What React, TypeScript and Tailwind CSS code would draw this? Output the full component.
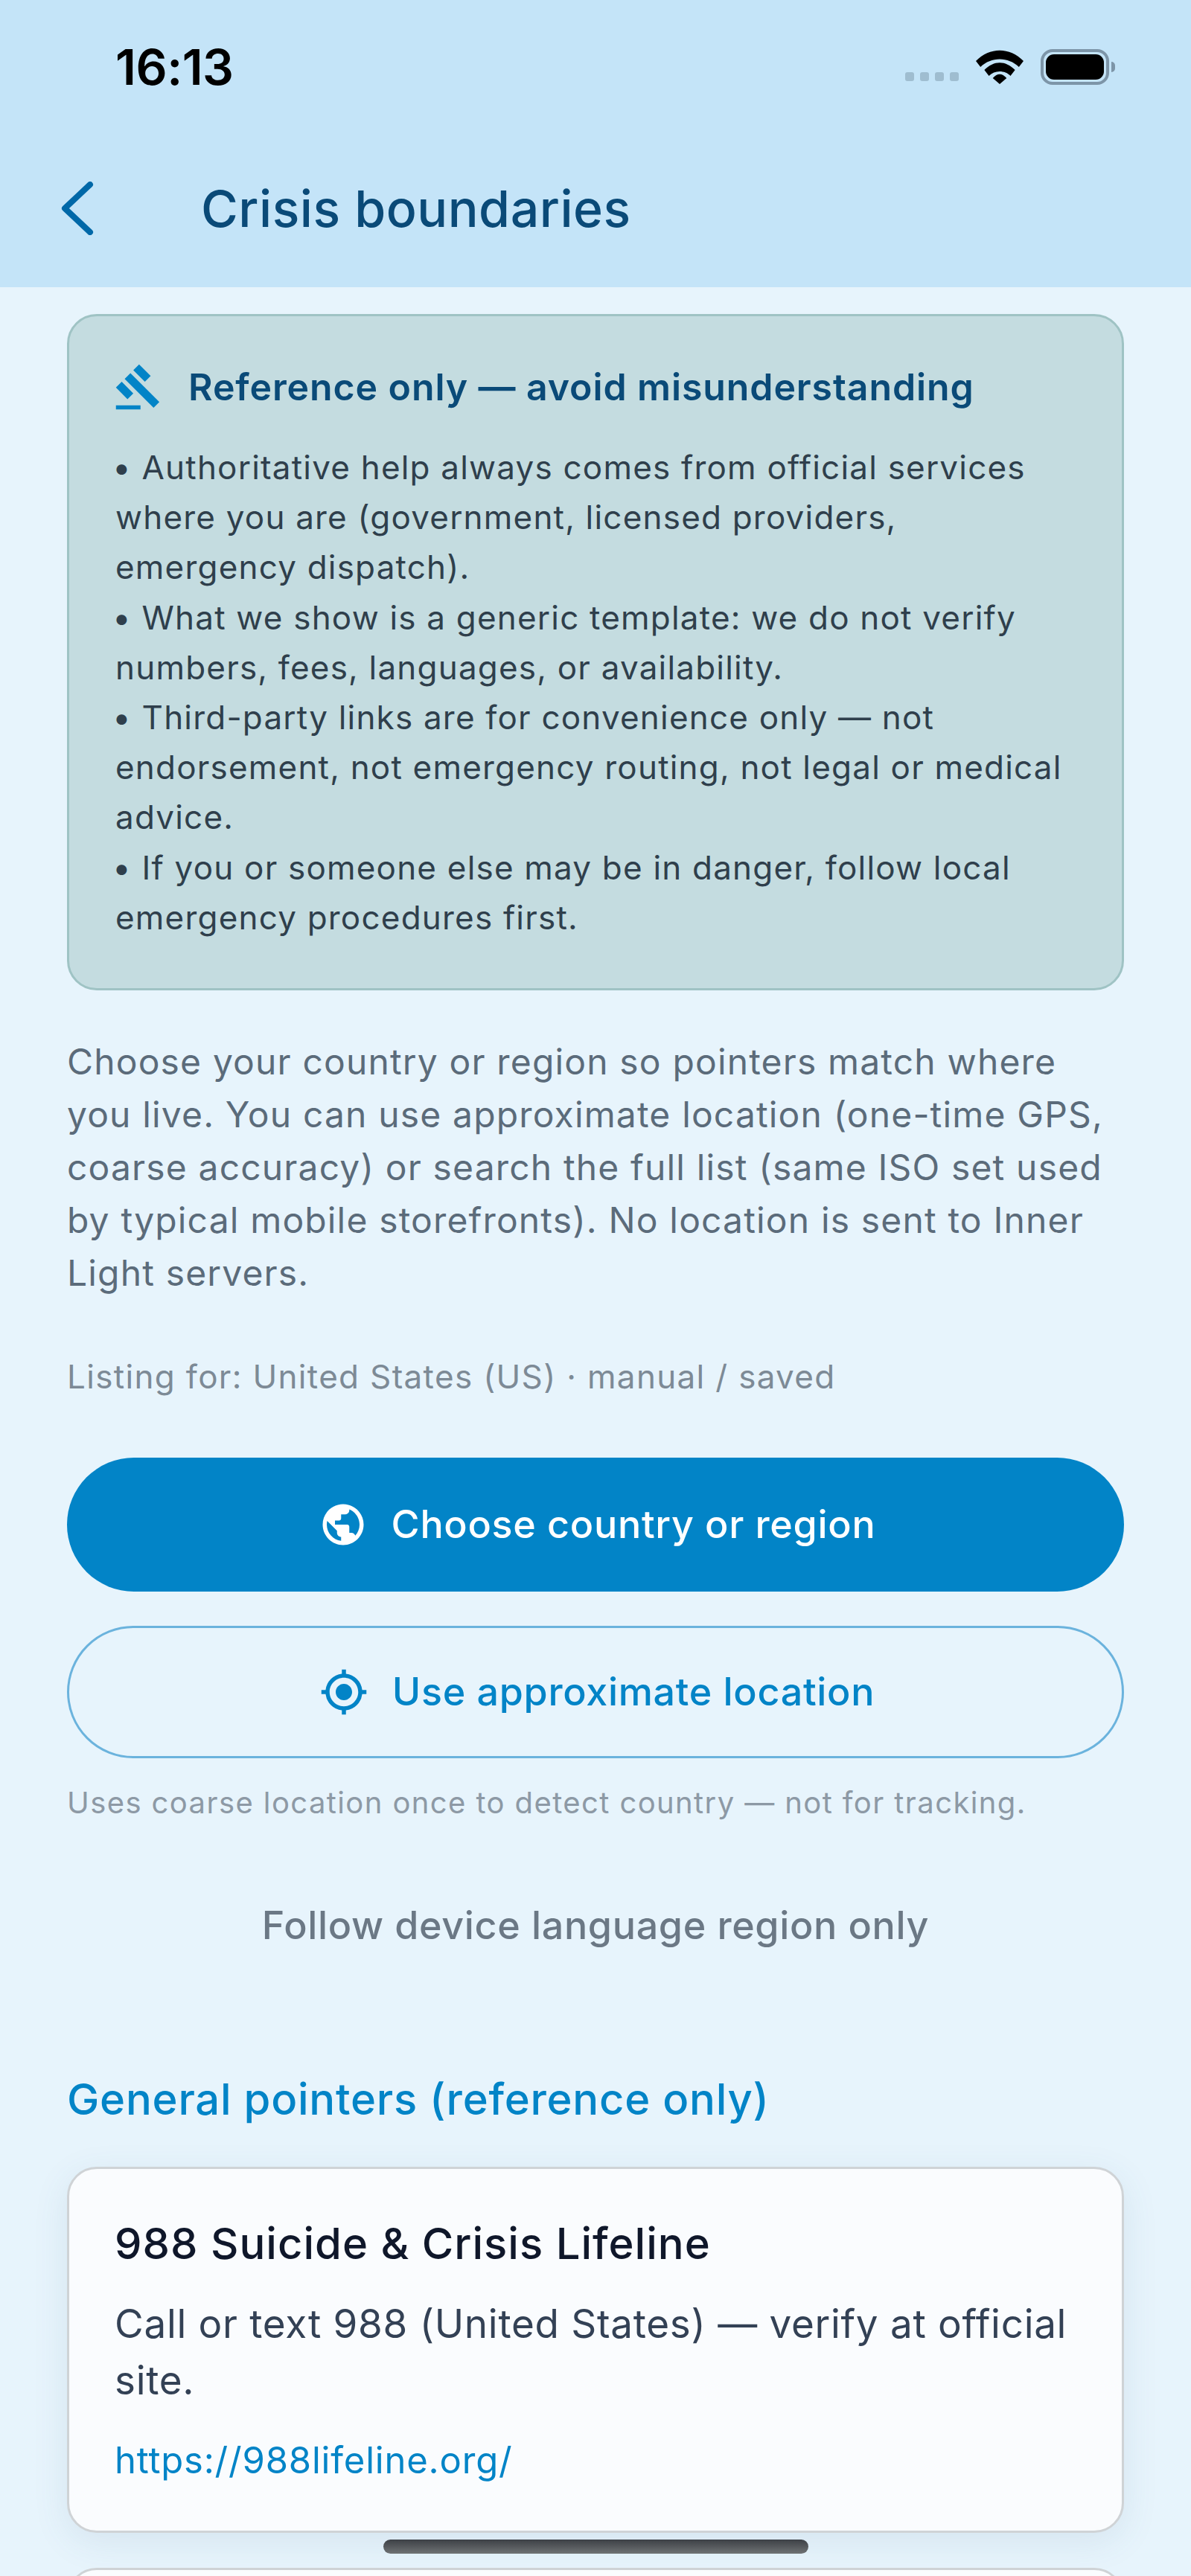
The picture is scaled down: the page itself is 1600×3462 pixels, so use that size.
import React from "react";
import { MdGavel, MdPublic, MdMyLocation } from "react-icons/md";

function StatusBar() {
  return (
    <div className="flex h-[180px] items-start justify-between pl-[155px] pr-[102px] pt-[58px]">
      <span className="text-[66px] leading-[64px] font-semibold text-black tracking-[-0.5px]">16:13</span>
      <div className="flex items-center gap-[23px] pt-[8px]">
        <div className="flex gap-[7.5px] pt-[26px]">
          {[0, 1, 2, 3].map((i) => (
            <span key={i} className="h-[12px] w-[12.5px] rounded-[3px] bg-[#9fbdd0]" />
          ))}
        </div>
        <svg width="64" height="46" viewBox="0 0 62 46" preserveAspectRatio="none">
          <path d="M0 15 L6 23 C20 9 42 9 56 23 L62 15 C44 -4 18 -4 0 15Z" fill="#000" />
          <path d="M11 28 L17 36 C24 28 38 28 45 36 L51 28 C38 15 24 15 11 28Z" fill="#000" transform="translate(0,-1)" />
          <path d="M22 38 L31 46 L40 38 C34 31 28 31 22 38Z" fill="#000" />
        </svg>
        <div className="flex items-center gap-[3px]">
          <div className="flex h-[48px] w-[92px] items-center justify-center rounded-[16px] border-[4px] border-[#7d95a8]">
            <div className="h-[34px] w-[78px] rounded-[11px] bg-black" />
          </div>
          <span className="h-[14px] w-[5px] rounded-r-full bg-[#7d95a8]" />
        </div>
      </div>
    </div>
  );
}

function Header() {
  return (
    <div className="h-[386px] bg-[#c4e4f8]">
      <StatusBar />
      <div className="flex items-center pl-[82px] pt-[60px]">
        <svg width="44" height="72" viewBox="0 0 44 72" fill="none" className="shrink-0">
          <path d="M40 4 L6 36 L40 68" stroke="#0068a8" strokeWidth="8" strokeLinecap="round" strokeLinejoin="round" transform="translate(-1,0)" />
        </svg>
        <h1 className="ml-[144px] text-[68px] leading-[80px] font-medium tracking-[0.5px] text-[#0a4a78]">Crisis boundaries</h1>
      </div>
    </div>
  );
}

function Notice() {
  const lines = [
    "• Authoritative help always comes from official services where you are (government, licensed providers, emergency dispatch).",
    "• What we show is a generic template: we do not verify numbers, fees, languages, or availability.",
    "• Third-party links are for convenience only — not endorsement, not emergency routing, not legal or medical advice.",
    "• If you or someone else may be in danger, follow local emergency procedures first.",
  ];
  return (
    <div className="rounded-[40px] border-[3px] border-[#9fc3c4] bg-[#c4dce0] pl-[62px] pr-[60px] pb-[61px] pt-[62px]">
      <div className="flex items-center gap-[34px]">
        <MdGavel className="h-[66px] w-[66px] shrink-0 -ml-[2px] text-[#0284c7]" />
        <h2 className="text-[50px] leading-[66px] font-semibold text-[#0a4a78] tracking-[0.9px]">Reference only — avoid misunderstanding</h2>
      </div>
      <div className="mt-[42px] text-[44px] leading-[67.2px] tracking-[1.2px] text-[#2f3f4c]">
        {lines.map((l) => (
          <p key={l} className="-indent-[4px]">{l}</p>
        ))}
      </div>
    </div>
  );
}

function Actions() {
  return (
    <>
      <p className="mt-[60px] text-[48px] leading-[71px] tracking-[1.15px] text-[#5b6b7a]">
        Choose your country or region so pointers match where you live. You can use approximate location (one-time GPS, coarse accuracy) or search the full list (same ISO set used by typical mobile storefronts). No location is sent to Inner Light servers.
      </p>
      <p className="mt-[74px] text-[44px] leading-[60px] tracking-[1.33px] text-[#7d8a96]">Listing for: United States (US) · manual / saved</p>
      <button className="mt-[79px] flex h-[180px] w-full items-center justify-center gap-[32px] rounded-full bg-[#0284c7] pl-[4px] text-[52px] font-medium tracking-[0.7px] text-white">
        <MdPublic className="h-[66px] w-[66px]" />
        Choose country or region
      </button>
      <button className="mt-[46px] flex h-[178px] w-full items-center justify-center gap-[32px] rounded-full border-[3px] border-[#6bb3dd] pl-[4px] text-[52px] font-medium tracking-[0.7px] text-[#0284c7]">
        <MdMyLocation className="h-[66px] w-[66px]" />
        Use approximate location
      </button>
      <p className="mt-[32px] text-[40px] leading-[56px] tracking-[1.4px] text-[#8d99a5]">Uses coarse location once to detect country — not for tracking.</p>
      <p className="mt-[102px] text-center text-[52px] leading-[70px] font-medium tracking-[0.65px] text-[#6b7885]">Follow device language region only</p>
      <h3 className="mt-[162px] text-[58px] leading-[72px] font-medium tracking-[0.75px] text-[#0284c7]">General pointers (reference only)</h3>
    </>
  );
}

function PointerCard() {
  return (
    <div className="mt-[55px] rounded-[40px] border-[3px] border-[#cfd3d6] bg-[#fafcfe] pl-[61px] pr-[60px] pb-[60px] pt-[64px] shadow-[0_12px_48px_rgba(60,100,130,0.1)]">
      <h4 className="text-[58px] leading-[72px] font-medium tracking-[1px] text-[#0f172a]">988 Suicide &amp; Crisis Lifeline</h4>
      <p className="mt-[34px] text-[53px] leading-[76px] tracking-[0.7px] text-[#334155]">Call or text 988 (United States) — verify at official site.</p>
      <p className="mt-[36px] text-[49px] leading-[68px] tracking-[0.8px] text-[#0284c7]">https://988lifeline.org/</p>
    </div>
  );
}

export default function App() {
  return (
    <div className="relative h-[3462px] w-[1600px] overflow-hidden bg-[#e7f4fc] font-['Inter',sans-serif]">
      <Header />
      <main className="px-[90px] pt-[36px]">
        <Notice />
        <Actions />
        <PointerCard />
        <div className="mt-[47px] h-[120px] rounded-[40px] border-[3px] border-[#cfd3d6] bg-[#fafcfe]" />
      </main>
      <div className="absolute bottom-[30px] left-[515px] h-[19px] w-[571px] rounded-full bg-gradient-to-b from-[#3d4146] to-[#6f7274]" />
    </div>
  );
}
